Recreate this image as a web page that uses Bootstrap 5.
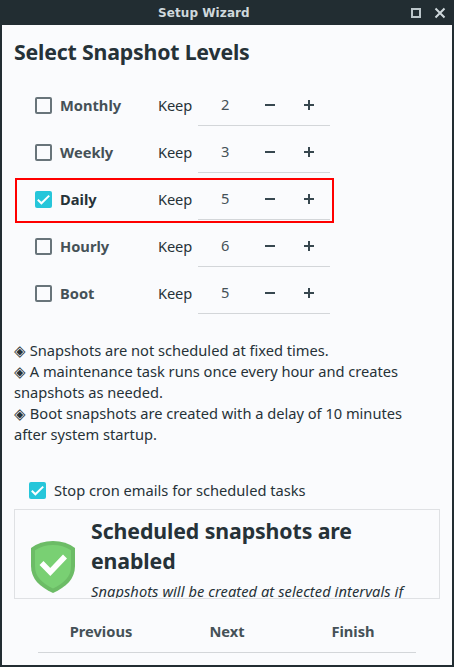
<!DOCTYPE html>
<html lang="en">
<head>
<meta charset="utf-8">
<meta name="viewport" content="width=device-width, initial-scale=1">
<title>Setup Wizard</title>
<link href="https://cdn.jsdelivr.net/npm/bootstrap@5.3.0/dist/css/bootstrap.min.css" rel="stylesheet">
<style>
body{margin:0;background:#222d32;font-family:"Noto Sans",sans-serif;font-size:14.67px;line-height:21px;color:#263238;overflow:hidden}
.window{width:454px;height:667px;border:solid #222d32;border-width:0 2px 2px;background:#fafbfd}
.titlebar{height:25px;background:#222d32;color:#cfd8dc;font:bold 12px/25px "DejaVu Sans",sans-serif;letter-spacing:.08px}
.titlebar .caption{padding:1px 0 0 156px}
.titlebar .tools{gap:12px;padding:1px 6px 0 0}
.page-title{font-size:21.3px;letter-spacing:-.19px;line-height:30px;font-weight:700;margin:12px 0 12px 12px}
.level{height:47px;padding-left:33px}
.tick{width:17px;height:17px;border:2px solid #68747a;border-radius:2px;background:#fafbfd;flex:none;display:block}
.tick.on{border:0;background:#26c6da}
.tick svg{display:block}
.level .tick{margin-top:5px}
.level-name{width:98px;margin-left:8px;font-weight:700;color:#455157;padding-top:5px}
.level-name.on{color:#263238}
.keep{width:40px;padding-top:5px;letter-spacing:-.15px}
.spin{width:132px;height:47px;border-bottom:1px solid #d3d6d9;color:#455157;padding:5px 16px 0 23px}
.spin .num{width:44px}
.spin svg{margin-right:29px;position:relative;top:.5px}
.spin svg:last-child{margin-right:0}
.mark-box{left:13px;top:178px;width:319px;height:45px;border:2px solid #f00}
.notes{margin:26px 12px 0 12px;width:400px;letter-spacing:-.015px}
.cron{margin:35px 0 0 27px}
.cron span+span{margin-left:8px}
.status{margin:8px 12px 0;height:90px;border:1px solid #dfe1e4;overflow:hidden;padding-left:16px}
.status .shield{margin:31px 16px 0 0;flex:none}
.status h2{font-size:21.3px;letter-spacing:-.1px;line-height:30px;font-weight:700;margin:6px 0 5px}
.status em{letter-spacing:.06px}
.actions{margin:13px 36px 0;height:41px;border-bottom:1px solid #d3d6d9;color:#455157;font-weight:700;padding-bottom:1px}
.actions button{font-weight:700;color:inherit;line-height:21px;width:126px}
</style>
<script src="https://cdn.jsdelivr.net/npm/bootstrap@5.3.0/dist/js/bootstrap.bundle.min.js"></script>
</head>
<body>
<div class="window position-relative">
  <header class="titlebar d-flex justify-content-between">
    <div class="caption">Setup Wizard</div>
    <div class="tools d-flex align-items-center">
      <svg width="12" height="12"><path d="M2 2h8v8H2z" fill="none" stroke="#bcc6ca" stroke-width="2"/></svg>
      <svg width="12" height="12"><path d="M1.5 1.5l9 9M10.5 1.5l-9 9" stroke="#cfd8dc" stroke-width="2"/></svg>
    </div>
  </header>
  <main>
    <h1 class="page-title">Select Snapshot Levels</h1>
    <div class="level d-flex align-items-center">
      <span class="tick"></span><span class="level-name">Monthly</span><span class="keep">Keep</span>
      <div class="spin d-flex align-items-center"><span class="num">2</span><svg width="10" height="10"><path d="M0 5h10" stroke="#37474f" stroke-width="2"/></svg><svg width="10" height="10"><path d="M0 5h10M5 0v10" stroke="#37474f" stroke-width="2"/></svg></div>
    </div>
    <div class="level d-flex align-items-center">
      <span class="tick"></span><span class="level-name">Weekly</span><span class="keep">Keep</span>
      <div class="spin d-flex align-items-center"><span class="num">3</span><svg width="10" height="10"><path d="M0 5h10" stroke="#37474f" stroke-width="2"/></svg><svg width="10" height="10"><path d="M0 5h10M5 0v10" stroke="#37474f" stroke-width="2"/></svg></div>
    </div>
    <div class="level d-flex align-items-center">
      <span class="tick on"><svg width="17" height="17"><path d="M2.8 8.8l3.6 3.5 7.8-7.7" fill="none" stroke="#fff" stroke-width="2"/></svg></span><span class="level-name on">Daily</span><span class="keep">Keep</span>
      <div class="spin d-flex align-items-center"><span class="num">5</span><svg width="10" height="10"><path d="M0 5h10" stroke="#37474f" stroke-width="2"/></svg><svg width="10" height="10"><path d="M0 5h10M5 0v10" stroke="#37474f" stroke-width="2"/></svg></div>
    </div>
    <div class="level d-flex align-items-center">
      <span class="tick"></span><span class="level-name">Hourly</span><span class="keep">Keep</span>
      <div class="spin d-flex align-items-center"><span class="num">6</span><svg width="10" height="10"><path d="M0 5h10" stroke="#37474f" stroke-width="2"/></svg><svg width="10" height="10"><path d="M0 5h10M5 0v10" stroke="#37474f" stroke-width="2"/></svg></div>
    </div>
    <div class="level d-flex align-items-center">
      <span class="tick"></span><span class="level-name">Boot</span><span class="keep">Keep</span>
      <div class="spin d-flex align-items-center"><span class="num">5</span><svg width="10" height="10"><path d="M0 5h10" stroke="#37474f" stroke-width="2"/></svg><svg width="10" height="10"><path d="M0 5h10M5 0v10" stroke="#37474f" stroke-width="2"/></svg></div>
    </div>
    <div class="notes">
      <div>◈ Snapshots are not scheduled at fixed times.</div>
      <div>◈ A maintenance task runs once every hour and creates<br>snapshots as needed.</div>
      <div>◈ Boot snapshots are created with a delay of 10 minutes<br>after system startup.</div>
    </div>
    <div class="cron d-flex align-items-center">
      <span class="tick on"><svg width="17" height="17"><path d="M2.8 8.8l3.6 3.5 7.8-7.7" fill="none" stroke="#fff" stroke-width="2"/></svg></span><span>Stop cron emails for scheduled tasks</span>
    </div>
    <section class="status d-flex">
      <svg class="shield" width="44" height="52" viewBox="0 0 44 52"><path d="M0 7Q9 0 22 0T44 7V25C44 38 35 46 22 52C9 46 0 38 0 25Z" fill="#6cbc66"/><path d="M4 9.200Q12 4 22 4T40 9.200V25C40 36 33 42 22 47.500C11 42 4 36 4 25Z" fill="#79d073"/><path d="M10.500 22l8.800 9L34 15.500" fill="none" stroke="#fff" stroke-width="5.500"/></svg>
      <div class="text-nowrap">
        <h2>Scheduled snapshots are<br>enabled</h2>
        <em>Snapshots will be created at selected intervals if</em>
      </div>
    </section>
    <footer class="actions d-flex align-items-center">
      <button type="button" class="border-0 bg-transparent p-0">Previous</button>
      <button type="button" class="border-0 bg-transparent p-0">Next</button>
      <button type="button" class="border-0 bg-transparent p-0">Finish</button>
    </footer>
  </main>
  <div class="mark-box position-absolute"></div>
</div>
</body>
</html>
